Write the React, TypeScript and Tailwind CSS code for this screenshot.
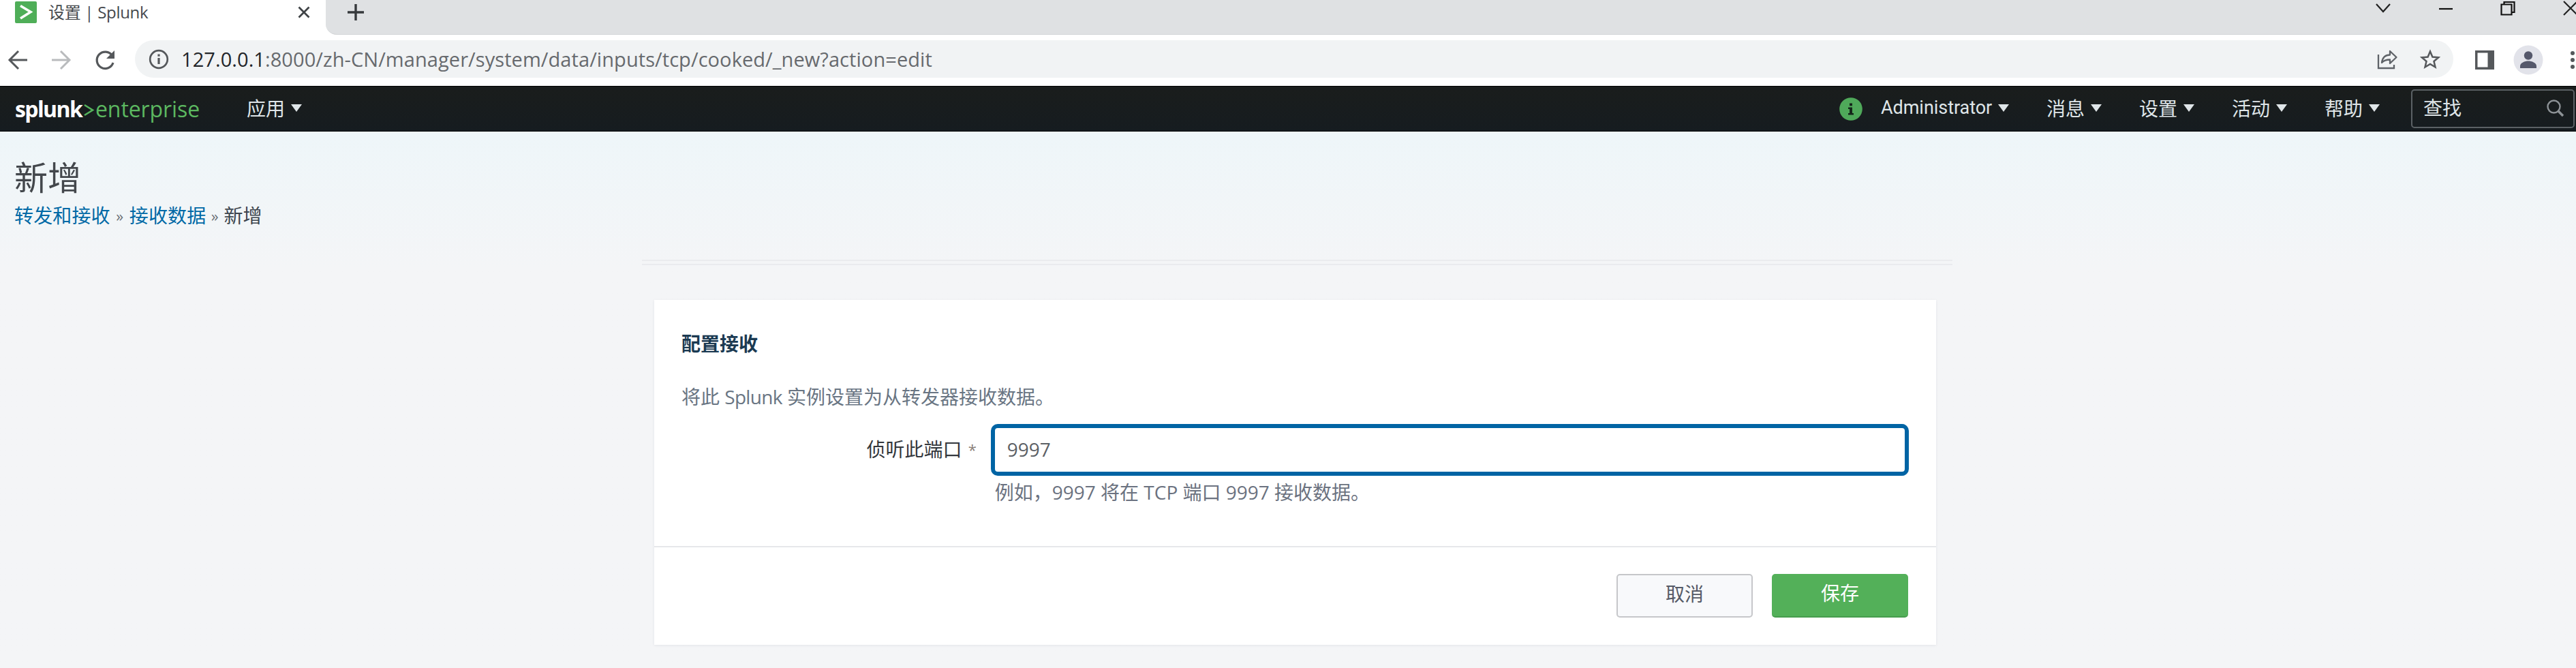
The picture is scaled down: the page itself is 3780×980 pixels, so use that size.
import type { ReactNode } from "react";

function Caret() {
  return (
    <svg width="16" height="11" viewBox="0 0 16 11" className="block shrink-0" fill="currentColor">
      <path d="M0 0h16L8 11z" />
    </svg>
  );
}

function MenuItem({ children, className }: { children: ReactNode; className: string }) {
  return (
    <button className={`flex shrink-0 items-center justify-between whitespace-nowrap leading-none text-[#dfe5e8] ${className}`}>
      <span>{children}</span>
      <Caret />
    </button>
  );
}

function TabStrip() {
  return (
    <div className="flex h-[51px] bg-white">
      <div className="flex h-9 w-[478px] shrink-0 items-center">
        <svg width="32" height="32" viewBox="0 0 32 32" className="ml-[22px] shrink-0">
          <rect width="32" height="32" rx="2" fill="#4fae58" />
          <path d="M8 6.500l15 9-15 9.500" fill="none" stroke="#fff" strokeWidth="3.600" />
        </svg>
        <span className="ml-[17px] w-[366px] whitespace-nowrap text-[24px] leading-none tracking-[-0.300px] text-[#45494d]">设置 | Splunk</span>
        <svg width="18" height="18" viewBox="0 0 18 18" className="shrink-0" stroke="#3f4346" strokeWidth="2.800" fill="none">
          <path d="M1.500 1.500l15 15M16.500 1.500l-15 15" />
        </svg>
      </div>
      <div className="flex h-full flex-1 rounded-bl-[16px] border-b border-[#d3d5d7] bg-[#dfe1e3]">
        <svg width="26" height="26" viewBox="0 0 26 26" className="ml-[31px] mt-[5px] shrink-0" stroke="#36393c" strokeWidth="3.400" fill="none">
          <path d="M13 1v24M1 13h24" />
        </svg>
        <svg width="24" height="16" viewBox="0 0 24 16" className="ml-auto mt-1 shrink-0" stroke="#222" strokeWidth="2.200" fill="none">
          <path d="M2 2l10 11L22 2" />
        </svg>
        <svg width="22" height="24" viewBox="0 0 22 24" className="ml-[69px] shrink-0" stroke="#111" strokeWidth="2.200" fill="none">
          <path d="M1 13h20" />
        </svg>
        <svg width="22" height="24" viewBox="0 0 22 24" className="ml-[69px] shrink-0" stroke="#111" strokeWidth="2.200" fill="none">
          <path d="M1.500 6.500h15v15h-15zM5.500 6.500v-3.500h15v15h-4" />
        </svg>
        <svg width="20" height="24" viewBox="0 0 20 24" className="ml-[69px] shrink-0 overflow-hidden" stroke="#222" strokeWidth="2.200" fill="none">
          <path d="M2 2l20 20M22 2L2 22" />
        </svg>
      </div>
    </div>
  );
}

function Toolbar() {
  return (
    <div className="flex h-[75px] items-start bg-white pt-2">
      <div className="flex h-[58px] shrink-0 items-center">
        <svg width="30" height="30" viewBox="0 0 30 30" className="ml-[11px]" stroke="#55585b" strokeWidth="3" fill="none">
          <path d="M29 15H3M16 2L3 15l13 13" />
        </svg>
        <svg width="30" height="30" viewBox="0 0 30 30" className="ml-[34px]" stroke="#b9bbbd" strokeWidth="3" fill="none">
          <path d="M1 15h26M14 2l13 13-13 13" />
        </svg>
        <svg width="32" height="32" viewBox="0 0 32 32" className="ml-[33px]" stroke="#55585b" strokeWidth="3.200" fill="none">
          <path d="M26.500 9.500A12.200 12.200 0 1 0 28 20" />
          <path d="M30 2v12H18z" fill="#55585b" stroke="none" />
        </svg>
      </div>
      <div className="ml-[28px] flex h-[55px] w-[3402px] shrink-0 items-center rounded-full bg-[#f1f3f4]">
        <svg width="30" height="30" viewBox="0 0 30 30" className="ml-[20px] shrink-0" stroke="#55585b" strokeWidth="2.700" fill="none">
          <circle cx="15" cy="15" r="12.800" />
          <path d="M15 13v9" strokeWidth="3.200" />
          <path d="M15 7.500v3.200" strokeWidth="3.200" />
        </svg>
        <span className="ml-[18px] whitespace-nowrap text-[29px] leading-none tracking-[0.070px] text-[#676a6e]">
          <span className="text-[#222529]">127.0.0.1</span>:8000/zh-CN/manager/system/data/inputs/tcp/cooked/_new?action=edit
        </span>
        <svg width="32" height="32" viewBox="0 0 32 32" className="ml-auto shrink-0" stroke="#5f6368" strokeWidth="2.300" fill="none">
          <path d="M3 9v20h23v-5" />
          <path d="M8 21c1-8 6-11.500 12-11.500V4l9.500 9-9.500 9v-5.500c-5 0-9 1-12 4.500z" strokeLinejoin="round" />
        </svg>
        <svg width="30" height="30" viewBox="0 0 30 30" className="ml-[32px] mr-[19px] shrink-0" stroke="#55585b" strokeWidth="2.500" fill="none">
          <path d="M15 3.500l3.400 8.100 8.700.7-6.600 5.700 2 8.500-7.500-4.500-7.500 4.500 2-8.500-6.600-5.700 8.700-.7z" />
        </svg>
      </div>
      <div className="flex h-[58px] flex-1 items-center">
        <svg width="28" height="28" viewBox="0 0 28 28" className="ml-[32px] shrink-0">
          <path d="M0 0h28v28H0zM3.500 3.500v21h15v-21z" fillRule="evenodd" fill="#55585b" />
        </svg>
        <svg width="44" height="44" viewBox="0 0 44 44" className="ml-[28px] shrink-0">
          <circle cx="22" cy="22" r="21.500" fill="#e2e3ea" />
          <circle cx="22" cy="15.500" r="6.200" fill="#55586b" />
          <path d="M10 34v-3c0-5 7-7.500 12-7.500s12 2.500 12 7.500v3z" fill="#55586b" />
        </svg>
        <svg width="8" height="30" viewBox="0 0 8 30" className="ml-[39px] shrink-0" fill="#55585b">
          <circle cx="4" cy="5" r="3" />
          <circle cx="4" cy="15" r="3" />
          <circle cx="4" cy="25" r="3" />
        </svg>
      </div>
    </div>
  );
}

function AppBar() {
  return (
    <div className="flex h-[67px] items-center border-y border-black bg-gradient-to-b from-[#1a1d1c] to-[#161c20]">
      <div className="ml-[22px] flex w-[340px] shrink-0 items-center whitespace-nowrap text-[32px] leading-none">
        <span className="w-[101px] font-bold tracking-[-1.600px] text-white">splunk</span>
        <svg width="16" height="22" viewBox="0 0 16 22" className="mt-1 shrink-0" fill="none" stroke="#55b45c" strokeWidth="2.600">
          <path d="M1 3l12 7.500L1 18" />
        </svg>
        <span className="ml-[1px] tracking-[-0.100px] text-[#5cb860]">enterprise</span>
      </div>
      <MenuItem className="w-[81px] pb-[2px] text-[28px]">应用</MenuItem>
      <svg width="34" height="34" viewBox="0 0 34 34" className="ml-auto mr-[27px] shrink-0">
        <circle cx="17" cy="17" r="16.800" fill="#4fa95a" />
        <path d="M15 8.500h4v3.800h-4zM13 14.500h6V23h2v2.500h-8V23h2v-6h-2z" fill="#14261a" />
      </svg>
      <MenuItem className="mr-[55px] w-[188px] pb-[2px] font-[Roboto,sans-serif] text-[27px] tracking-[-0.050px]">Administrator</MenuItem>
      <MenuItem className="mr-[55px] w-[81px] pb-[2px] text-[28px]">消息</MenuItem>
      <MenuItem className="mr-[55px] w-[81px] pb-[2px] text-[28px]">设置</MenuItem>
      <MenuItem className="mr-[55px] w-[81px] pb-[2px] text-[28px]">活动</MenuItem>
      <MenuItem className="mr-[46px] w-[81px] pb-[2px] text-[28px]">帮助</MenuItem>
      <div className="mr-[2px] flex h-[57px] w-[240px] shrink-0 items-center justify-between rounded-[5px] border-2 border-[#5b6165] pb-[3px] pl-4 pr-[13px] text-[28px] leading-none text-[#dfe5e8]">
        <span>查找</span>
        <svg width="27" height="27" viewBox="0 0 27 27" fill="none" stroke="#8d9296" strokeWidth="2.400">
          <circle cx="11.500" cy="11.500" r="9" />
          <path d="M18 18l7 7" strokeWidth="3.600" />
        </svg>
      </div>
    </div>
  );
}

function ReceivingCard() {
  return (
    <section className="ml-[960px] mt-[51px] flex h-[506px] w-[1881px] flex-col bg-white shadow-[0_1px_4px_rgba(30,40,60,0.080)]">
      <div className="h-[361px] px-10 pt-[50px]">
        <h2 className="text-[28px] font-bold leading-[28px] text-[#1b3a52]">配置接收</h2>
        <p className="mt-[50px] whitespace-nowrap text-[28px] leading-[28px] text-[#697583]">
          将此 <span className="tracking-[-0.700px]">Splunk</span> 实例设置为从转发器接收数据。
        </p>
        <div className="mt-[26px] flex">
          <label className="mr-[21px] flex h-[74px] w-[433px] items-center justify-end whitespace-nowrap text-[28px] leading-none text-[#33373c]">
            侦听此端口
            <span className="ml-[9px] text-[22px] text-[#8a8078]">*</span>
          </label>
          <div className="w-[1348px]">
            <div className="flex h-[76px] items-center rounded-[10px] border-[6px] border-[#0064a4] bg-white pb-[2px] pl-[18px] text-[28px] leading-none text-[#5c6065]">9997</div>
            <p className="mt-[10px] whitespace-nowrap pl-[6px] text-[28px] leading-[28px] text-[#6b7280]">例如，9997 将在 TCP 端口 9997 接收数据。</p>
          </div>
        </div>
      </div>
      <div className="flex flex-1 justify-end gap-[28px] border-t-2 border-[#e6e7ea] pr-[41px] pt-[39px]">
        <button className="h-[64px] w-[200px] rounded-[5px] border-2 border-[#c6c7ca] bg-[#f8f9fb] pb-[6px] text-[28px] leading-none text-[#555a66]">取消</button>
        <button className="h-[64px] w-[200px] rounded-[5px] border-b-2 border-[#469c4d] bg-[#53b059] pb-[6px] text-[28px] leading-none text-white">保存</button>
      </div>
    </section>
  );
}

export default function App() {
  return (
    <div className="flex h-[980px] w-[3780px] flex-col overflow-hidden bg-[#f4f5f7] font-['Open_Sans','Noto_Sans_CJK_SC',sans-serif]">
      <TabStrip />
      <Toolbar />
      <AppBar />
      <main className="flex-1 bg-gradient-to-b from-[#eef6f9] to-[#f4f5f7] to-[200px]">
        <div className="h-[188px] pl-[21px] pt-[43px]">
          <h1 className="text-[49px] leading-[49px] text-[#43474c]">新增</h1>
          <nav className="mt-[17px] flex items-center whitespace-nowrap text-[28px] leading-[28px] tracking-[0.150px] text-[#3c444d]">
            <a className="text-[#0069a6]">转发和接收</a>
            <span className="w-[28px] text-center text-[22px] text-[#6b7076]">»</span>
            <a className="text-[#0069a6]">接收数据</a>
            <span className="w-[26px] text-center text-[22px] text-[#6b7076]">»</span>
            <span>新增</span>
          </nav>
        </div>
        <div className="ml-[942px] h-[8px] w-[1923px] border-y-2 border-[#eaebee]" />
        <ReceivingCard />
      </main>
    </div>
  );
}
